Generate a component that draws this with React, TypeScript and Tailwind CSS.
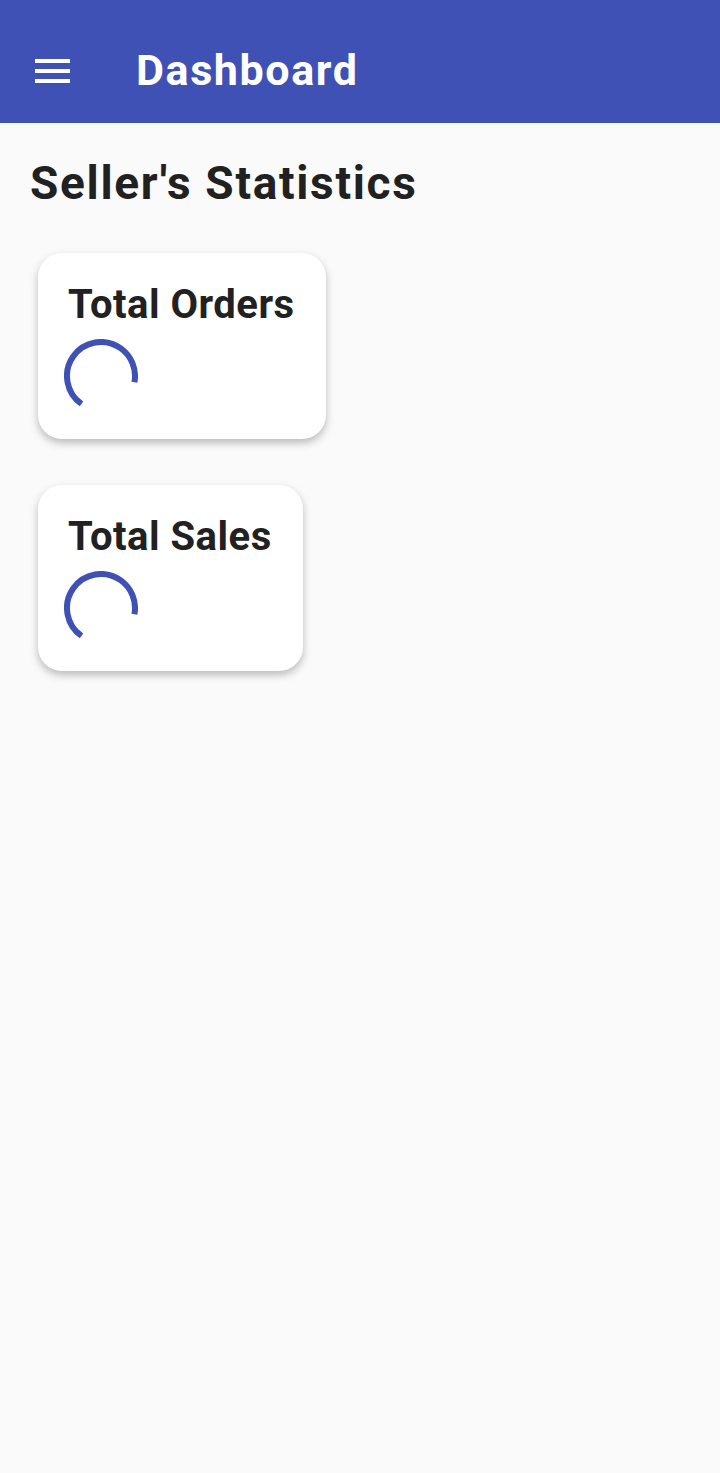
const font = { fontFamily: "Roboto, 'Noto Sans', sans-serif" };

function Spinner() {
  return (
    <svg width="74" height="74" viewBox="0 0 74 74" className="block">
      <circle
        cx="37"
        cy="37"
        r="34"
        fill="none"
        stroke="#3F51B5"
        strokeWidth="6"
        strokeDasharray="145.4 213.6"
        transform="rotate(125 37 37)"
      />
    </svg>
  );
}

function StatCard({ title }: { title: string }) {
  return (
    <div className="self-start bg-white rounded-[24px] shadow-[0_4px_8px_rgba(0,0,0,0.26)] pl-[30px] pr-[31px] pt-[28px] pb-[26px]">
      <h2 className="text-[40px] leading-[48px] font-bold tracking-[0.5px] text-[#212121] whitespace-nowrap">
        {title}
      </h2>
      <div className="mt-[10px] -ml-[4px]">
        <Spinner />
      </div>
    </div>
  );
}

export default function App() {
  return (
    <div style={font} className="w-[720px] min-h-[1473px] bg-[#FAFAFA] flex flex-col">
      <header className="h-[123px] pt-[18px] bg-[#3F51B5] flex items-center">
        <div className="ml-[35px] w-[35px] flex flex-col gap-[6px]">
          <span className="block h-[4px] bg-white" />
          <span className="block h-[4px] bg-white" />
          <span className="block h-[4px] bg-white" />
        </div>
        <h1 className="ml-[66px] text-[43px] leading-none font-bold tracking-[1.6px] text-white">
          Dashboard
        </h1>
      </header>
      <main className="flex flex-col">
        <h2 className="ml-[30px] mt-[32px] text-[46px] leading-[56px] font-bold tracking-[1.7px] text-[#212121]">
          Seller's Statistics
        </h2>
        <div className="ml-[38px] mt-[42px] flex flex-col gap-[46px]">
          <StatCard title="Total Orders" />
          <StatCard title="Total Sales" />
        </div>
      </main>
    </div>
  );
}
